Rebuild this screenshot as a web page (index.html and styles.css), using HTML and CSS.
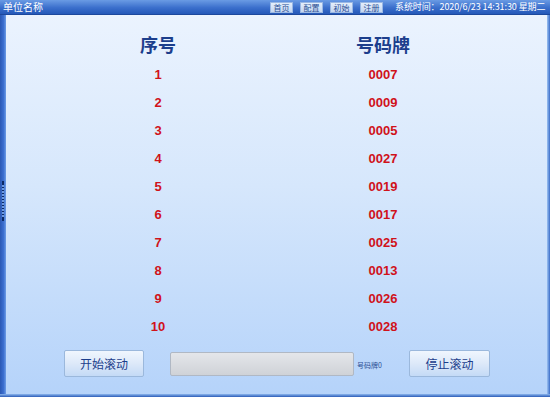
FILE: index.html
```html
<!DOCTYPE html>
<html lang="zh-CN">

<head>
  <meta charset="UTF-8" />
  <title>号码牌</title>
  <link rel="stylesheet" href="styles.css">
</head>

<body>
  <div id="frame">
    <div id="topBar">
      <div id="unitName">单位名称</div>
      <div id="navList">
        <div class="navButton">首页</div>
        <div class="navButton">配置</div>
        <div class="navButton">初始</div>
        <div class="navButton">注册</div>
      </div>
      <div id="sysTime">系统时间：2020/6/23 14:31:30 星期二</div>
    </div>
    <div id="middle">
      <div id="leftBar"><div id="grip"></div></div>
      <div id="content">
        <div id="board">
          <div class="headCell">序号</div>
          <div class="headCell">号码牌</div>
          <div class="cell">1</div><div class="cell">0007</div>
          <div class="cell">2</div><div class="cell">0009</div>
          <div class="cell">3</div><div class="cell">0005</div>
          <div class="cell">4</div><div class="cell">0027</div>
          <div class="cell">5</div><div class="cell">0019</div>
          <div class="cell">6</div><div class="cell">0017</div>
          <div class="cell">7</div><div class="cell">0025</div>
          <div class="cell">8</div><div class="cell">0013</div>
          <div class="cell">9</div><div class="cell">0026</div>
          <div class="cell">10</div><div class="cell">0028</div>
        </div>
        <div id="controls">
          <div class="bigButton">开始滚动</div>
          <div id="numberBox"></div>
          <div id="numberLabel">号码牌0</div>
          <div class="bigButton" id="stopButton">停止滚动</div>
        </div>
      </div>
      <div id="rightBar"></div>
    </div>
    <div id="bottomBar"></div>
  </div>
</body>

</html>
```

FILE: styles.css
```css
html {
  background: #b5d3fa;
}

body {
  margin: 0;
  padding: 0;
  overflow: hidden;
  font-family: "Noto Sans CJK SC", "DejaVu Sans", sans-serif;
}

#frame {
  width: 550px;
  height: 397px;
  display: flex;
  flex-direction: column;
}

#topBar {
  height: 15px;
  display: flex;
  align-items: center;
  background: linear-gradient(to bottom, #6a9be4, #3b6fcc 55%, #2458b8);
  border-bottom: 1px solid #1c489c;
  box-sizing: border-box;
  color: white;
}

#unitName {
  font-size: 10px;
  line-height: 14px;
  padding-left: 3px;
  width: 267px;
}

#navList {
  display: flex;
  gap: 7px;
}

.navButton {
  width: 23px;
  height: 11px;
  box-sizing: border-box;
  border: 1px solid #9ab8e4;
  background: linear-gradient(to bottom, #e4eefb, #c3d7f3);
  color: #2b4f94;
  font-size: 8px;
  line-height: 9px;
  text-align: center;
}

#sysTime {
  margin-left: 12px;
  font-size: 9px;
  line-height: 14px;
  white-space: nowrap;
  letter-spacing: -0.1px;
}

#middle {
  flex: 1;
  display: flex;
}

#leftBar {
  width: 6px;
  background: linear-gradient(to right, #2a58b4, #3c6fd0 60%, #6d9de6);
  display: flex;
  align-items: center;
  justify-content: center;
}

#grip {
  width: 2px;
  height: 34px;
  margin-top: -8px;
  background: repeating-linear-gradient(to bottom, #0d2a66 0, #0d2a66 1px, #6d9ae0 1px, #6d9ae0 3px);
  border-top: 3px solid #0d2a66;
  border-bottom: 3px solid #0d2a66;
}

#rightBar {
  width: 3px;
  background: linear-gradient(to right, #9cc2f2, #3a6cc8);
}

#bottomBar {
  height: 3px;
  background: linear-gradient(to bottom, #8cb6ee, #2b5cb8);
}

#content {
  flex: 1;
  background: linear-gradient(to bottom, #ebf3fe, #d6e7fc 45%, #b5d3fa);
  padding-top: 15px;
}

#board {
  display: grid;
  grid-template-columns: 150px 150px;
  column-gap: 75px;
  padding-left: 77px;
}

.headCell {
  font-size: 18px;
  font-weight: bold;
  line-height: 28px;
  color: #1c3e8c;
  text-align: center;
  margin-bottom: 3px;
}

.cell {
  font-family: "Liberation Sans", Arial, sans-serif;
  font-size: 13px;
  font-weight: bold;
  line-height: 28px;
  color: #d0121a;
  text-align: center;
}

#controls {
  display: flex;
  align-items: center;
  padding-left: 58px;
  margin-top: 9px;
}

.bigButton {
  width: 80px;
  height: 27px;
  box-sizing: border-box;
  border: 1px solid #9bb8dc;
  border-radius: 2px;
  background: linear-gradient(to bottom, #f0f6fe, #dde9f9 50%, #c4daf6);
  color: #1c3e8c;
  font-size: 12px;
  line-height: 25px;
  text-align: center;
}

#numberBox {
  width: 184px;
  height: 24px;
  margin-left: 26px;
  box-sizing: border-box;
  border: 1px solid #b0b8c4;
  border-radius: 2px;
  background: linear-gradient(to bottom, #e4e6ea, #cfd2d7);
}

#numberLabel {
  margin-left: 3px;
  font-size: 7px;
  color: #2b4f94;
  width: 28px;
  padding-top: 2px;
}

#stopButton {
  margin-left: 24px;
  width: 81px;
}
```
